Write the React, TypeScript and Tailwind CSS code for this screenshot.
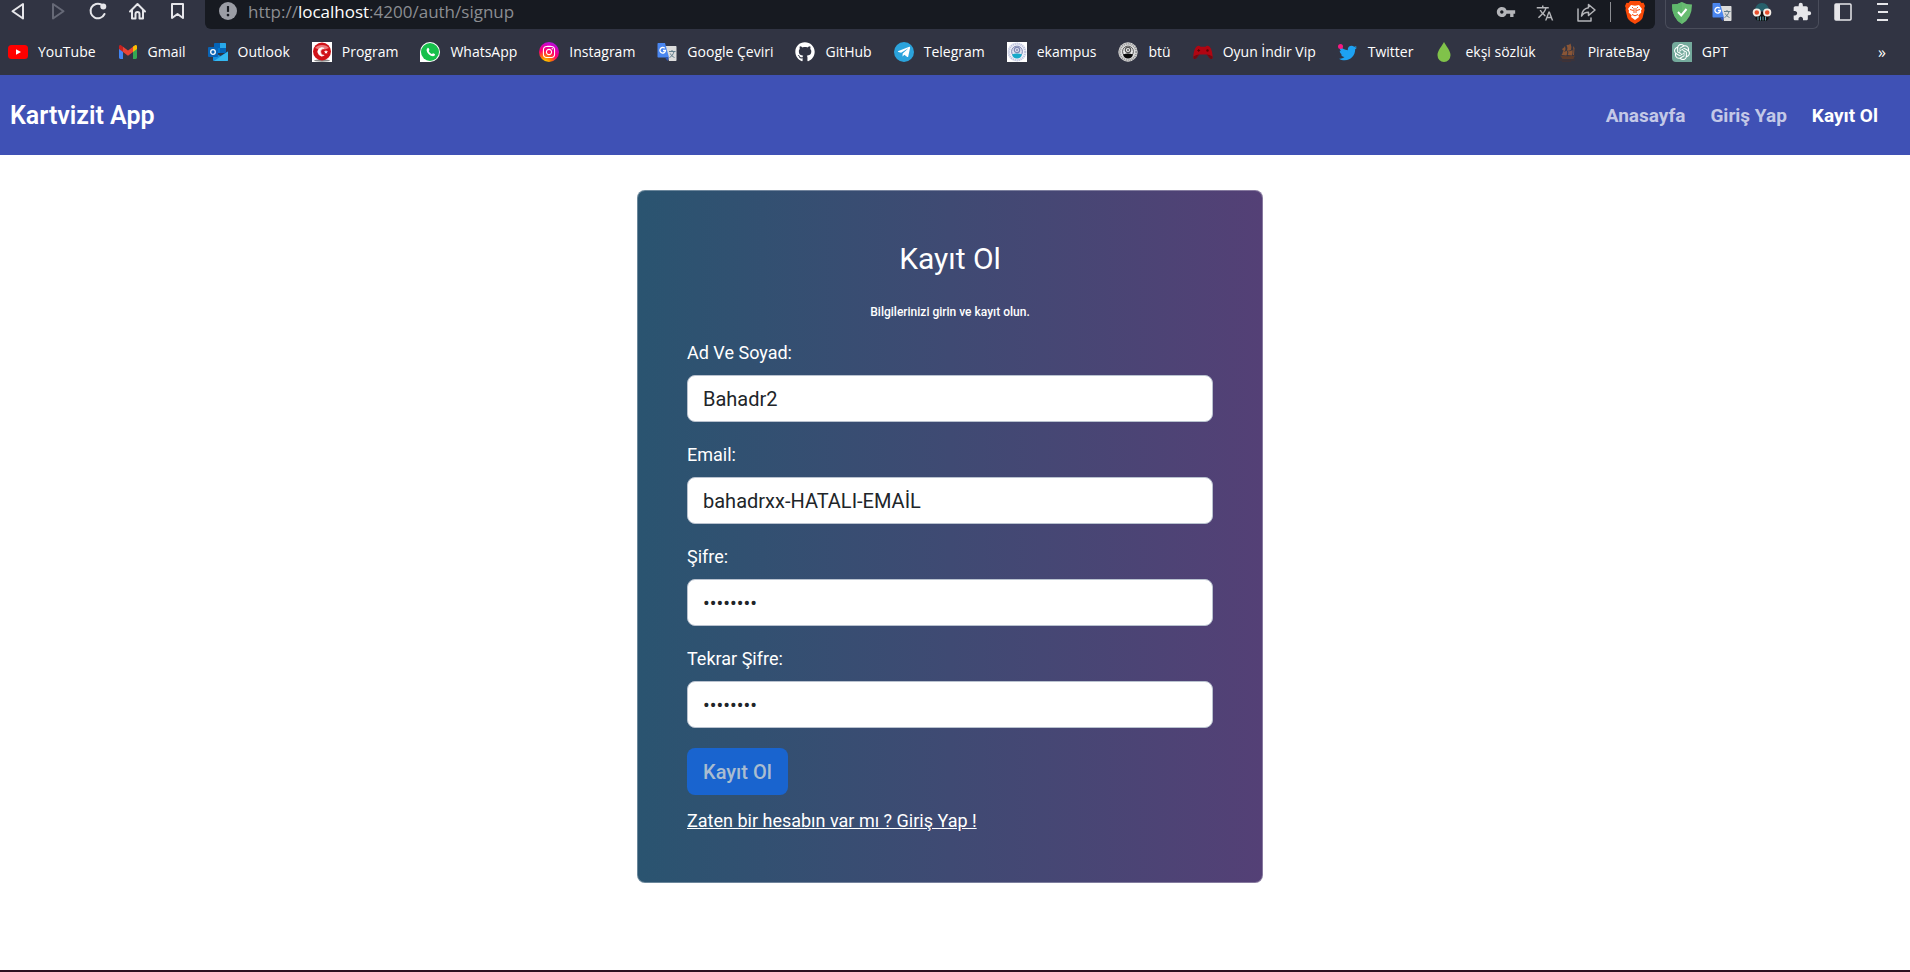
import React from "react";
import { FaWhatsapp, FaGithub, FaTelegramPlane, FaInstagram, FaTwitter } from "react-icons/fa";
import { MdVpnKey, MdTranslate, MdExtension } from "react-icons/md";
import { SiOpenai } from "react-icons/si";

const YouTubeIcon = () => (
  <svg viewBox="0 0 20 20" className="size-5">
    <rect x="0" y="3" width="20" height="14" rx="3.5" fill="#f00" />
    <path d="M8 7.2 13 10l-5 2.8z" fill="#fff" />
  </svg>
);

const GmailIcon = () => (
  <svg viewBox="0 0 20 20" className="size-5">
    <path d="M1 6v9.6c0 .8.6 1.4 1.4 1.4H5V9z" fill="#4285f4" />
    <path d="M19 6v9.6c0 .8-.6 1.4-1.4 1.4H15V9z" fill="#34a853" />
    <path d="M15 4.6 17 3.3c1-.6 2 .1 2 1.2V7l-4 3z" fill="#fbbc04" />
    <path d="M5 10V4.7l5 3.8 5-3.8V10l-5 3.8z" fill="#ea4335" />
    <path d="M1 7V4.5c0-1.100 1-1.800 2-1.200L5 4.700V10z" fill="#c5221f" />
  </svg>
);

const OutlookIcon = () => (
  <svg viewBox="0 0 20 20" className="size-5">
    <rect x="6" y="1" width="12" height="10" rx="1" fill="#0364b8" />
    <path d="M12 1h5a1 1 0 0 1 1 1v4h-6z" fill="#28a8ea" />
    <path d="M6 6h6v5H6z" fill="#0078d4" />
    <path d="M5 10l7.500 4L20 9.500V18a1 1 0 0 1-1 1H6a1 1 0 0 1-1-1z" fill="#1490df" />
    <path d="M20 9.500V18a1 1 0 0 1-1 1H6z" fill="#35b8f1" />
    <rect x="0" y="5" width="10" height="10" rx="1" fill="#0a64b5" />
    <circle cx="5" cy="10" r="2.300" fill="none" stroke="#fff" strokeWidth="1.300" />
  </svg>
);

const ProgramIcon = () => (
  <svg viewBox="0 0 20 20" className="size-5">
    <rect width="20" height="20" fill="#fff" />
    <ellipse cx="10" cy="18.500" rx="8" ry="1.200" fill="#888" />
    <circle cx="10" cy="9.500" r="9" fill="#d01218" />
    <path d="M3 6a8 6 0 0 1 14 0q-7 3-14 0z" fill="#ec7a7c" />
    <path d="M12.200 6.200a4.200 4.200 0 1 0 0 7.200 3.400 3.400 0 1 1 0-7.200z" fill="#fff" stroke="#fff" strokeWidth=".6" />
    <path d="m14 8 .6 1.300 1.500.1-1.200 1 .4 1.400-1.300-.8-1.300.8.4-1.400-1.200-1 1.500-.1z" fill="#fff" />
  </svg>
);

const WhatsAppIcon = () => (
  <span className="grid size-5 place-items-center rounded-full rounded-bl-xs bg-white">
    <span className="grid size-[18px] place-items-center rounded-full bg-[#17c04b]">
      <svg viewBox="3 3 14 14" className="size-[13px]">
        <path d="M6.700 5.300c.6-.6 1.200-.3 1.400.2l.7 1.600c.2.500-.6 1-.7 1.400.5 1.300 1.800 2.600 3.300 3.200.5 0 .9-1.100 1.400-.9l1.700.8c.6.3.3 1.500-.4 2-2.500 1.700-8.300-2.500-8.300-6.300 0-.8.400-1.500.9-2z" fill="#fff" />
      </svg>
    </span>
  </span>
);

const InstagramIcon = () => (
  <span className="grid size-5 place-items-center rounded-full bg-[radial-gradient(circle_at_30%_105%,#ffd600_5%,#ff7a00_25%,#ff0169_50%,#d300c5_75%,#7638fa_100%)]">
    <FaInstagram className="size-3.5 text-white" />
  </span>
);

const TranslateIcon = () => (
  <svg viewBox="0 0 20 20" className="size-5">
    <path d="M8 4h10.500c.6 0 1 .4 1 1v13c0 .6-.4 1-1 1H12z" fill="#dcdcdc" />
    <path d="M12 9.500h6.500M15 8v1.500M17 9.500c-.6 3-2.600 5-4.500 6M13.300 11.500c.8 1.800 2.400 3.200 4.200 4" fill="none" stroke="#607d8b" strokeWidth="1" />
    <path d="M1.500 1H8l4 14.500H1.500c-.6 0-1-.4-1-1V2c0-.6.400-1 1-1z" fill="#4a86f0" />
    <path d="M8 15.500h4L10.500 19z" fill="#2b52b8" />
    <path d="M7.700 6.300A2.800 2.800 0 1 0 8.500 8.500H6" fill="none" stroke="#fff" strokeWidth="1.300" />
  </svg>
);

const TelegramIcon = () => (
  <span className="grid size-5 place-items-center rounded-full bg-[#2ba3dc]">
    <FaTelegramPlane className="size-3.5 text-white" />
  </span>
);

const Crest = ({ square }: { square?: boolean }) => {
  const line = square ? "#8089b4" : "#555";
  return (
    <svg viewBox="0 0 20 20" className="size-5">
      {square && <rect width="20" height="20" fill="#fff" />}
      <circle cx="10" cy="10" r="9.700" fill={square ? "#eef0f8" : "#dedede"} />
      <circle cx="10" cy="10" r="8.200" fill="none" stroke={square ? "#bcc2dc" : "#999"} strokeWidth="2" strokeDasharray="1.200 .8" />
      <circle cx="10" cy="9.500" r="5.400" fill={square ? "#dfe3f0" : "#eee"} stroke={line} strokeWidth="1" />
      <circle cx="10" cy="8" r="2.700" fill="none" stroke={line} strokeWidth="1.200" />
      <circle cx="10" cy="8" r="1" fill={line} />
      <path d="M5 12.500q5-2 10 0-1 4-5 4t-5-4z" fill={square ? "#18a9c9" : "#0a0a0a"} />
    </svg>
  );
};

const GamepadIcon = () => (
  <svg viewBox="0 0 20 20" className="size-5">
    <path d="M4.500 4C6 3.400 7 4 7.500 4.800h5C13 4 14 3.400 15.500 4c2.500 1 4 6 4.200 11 .1 2.500-2 2.700-3.200 1l-2.700-3.500H6.200L3.500 16c-1.200 1.700-3.300 1.500-3.200-1C.500 10 2 5 4.500 4z" fill="#b00512" />
    <path d="M.4 14.500l3-1.500 2.800-.5h7.600l2.800.5 3 1.500c.2 3-1.900 3.200-3.100 1.500l-2.700-3.500H6.200L3.500 16c-1.200 1.700-3.300 1.500-3.100-1.500z" fill="#6d0b12" />
    <path d="M4.300 8.500h2.800M5.700 7.100v2.800" stroke="#5c0408" strokeWidth="1" />
    <circle cx="14.500" cy="8.500" r="1.200" fill="#5c0408" />
  </svg>
);

const TwitterIcon = () => (
  <span className="relative grid size-5 place-items-center">
    <FaTwitter className="mt-0.5 size-[18px] text-[#1da1f2]" />
    <span className="absolute top-0.5 left-0 size-[5px] rounded-full bg-[#f91880]" />
  </span>
);

const DropIcon = () => (
  <svg viewBox="0 0 20 20" className="size-5">
    <path d="M9 0c2 4 6.500 8.500 6.500 13A6.500 6.800 0 0 1 9 20a6.500 6.800 0 0 1-6.500-7C2.500 8.500 7 4 9 0z" fill="#80c24a" />
  </svg>
);

const ShipIcon = () => (
  <svg viewBox="0 0 20 20" className="size-5">
    <path d="M4 7q2-1 3-3 1 3 0 5-2 .5-3-2zM8.500 3q3 0 4-1.500Q14 5 13 8q-2 1-4 .5Q10 6 8.500 3zM3.500 13q1.500-2 1.500-4 2 1 4-.5 1 3-.5 5zM9.500 13q1.500-2 .5-4 3 .5 4.500-1 .5 3-.5 5.500zM15 4l1.500 2-.5 7h-1q1-5 0-9z" fill="#8a5636" />
    <path d="M2 13.500q7 1.500 15 0L15.500 17H4.500z" fill="#5e3c2c" />
    <path d="M1 18h16M4 19.300h9" stroke="#443335" strokeWidth="1" />
  </svg>
);

const GptIcon = () => (
  <span className="grid size-5 place-items-center rounded-l bg-[#74aa9c]">
    <SiOpenai className="size-4 text-white" />
  </span>
);

const bookmarks: { label: string; icon: React.ReactNode }[] = [
  { label: "YouTube", icon: <YouTubeIcon /> },
  { label: "Gmail", icon: <GmailIcon /> },
  { label: "Outlook", icon: <OutlookIcon /> },
  { label: "Program", icon: <ProgramIcon /> },
  { label: "WhatsApp", icon: <WhatsAppIcon /> },
  { label: "Instagram", icon: <InstagramIcon /> },
  { label: "Google Çeviri", icon: <TranslateIcon /> },
  { label: "GitHub", icon: <FaGithub className="size-5 text-white" /> },
  { label: "Telegram", icon: <TelegramIcon /> },
  { label: "ekampus", icon: <Crest square /> },
  { label: "btü", icon: <Crest /> },
  { label: "Oyun İndir Vip", icon: <GamepadIcon /> },
  { label: "Twitter", icon: <TwitterIcon /> },
  { label: "ekşi sözlük", icon: <DropIcon /> },
  { label: "PirateBay", icon: <ShipIcon /> },
  { label: "GPT", icon: <GptIcon /> },
];

const stroke = { fill: "none", stroke: "currentColor", strokeWidth: 1.6, strokeLinejoin: "round", strokeLinecap: "round" } as const;

function Toolbar() {
  return (
    <div className="flex h-[29px] items-start text-[#e6e6ea]">
      <div className="flex gap-5 pt-px pl-2">
        <button aria-label="Geri" className="size-5">
          <svg viewBox="0 0 20 20" {...stroke} strokeWidth={2}><path d="M15 3v14.500L4.500 10.200z" /></svg>
        </button>
        <button aria-label="İleri" className="size-5 text-[#666977]">
          <svg viewBox="0 0 20 20" {...stroke} strokeWidth={2}><path d="M5 3v14.500l10.500-7.300z" /></svg>
        </button>
        <button aria-label="Yenile" className="size-5">
          <svg viewBox="0 0 20 20" {...stroke} strokeWidth={2}>
            <path d="M13.500 3.700A7.300 7.300 0 1 0 16.500 13" />
            <circle cx="15.300" cy="5.500" r="2" fill="currentColor" />
          </svg>
        </button>
        <button aria-label="Ana sayfa" className="size-5">
          <svg viewBox="0 0 20 20" {...stroke} strokeWidth={2}>
            <path d="M2 10.500 9.500 3l7.500 7.500M4 9v8.500h3.500V13a2 2 0 0 1 4 0v4.500H15V9" />
          </svg>
        </button>
        <button aria-label="Yer işareti" className="size-5">
          <svg viewBox="0 0 20 20" {...stroke} strokeWidth={2}><path d="M4 3h11v14l-5.500-4L4 17z" /></svg>
        </button>
      </div>
      <div className="ml-[17px] flex h-[29px] grow items-start rounded-b-md bg-[#171a21] pr-2.5 pl-3.5 text-[#b4b5b9]">
        <svg viewBox="0 0 20 20" className="mt-0.5 size-[18px]">
          <circle cx="10" cy="10" r="10" fill="#9b9da5" />
          <path d="M10 4.500v6.500" stroke="#171a21" strokeWidth="2.400" />
          <circle cx="10" cy="14.500" r="1.500" fill="#171a21" />
        </svg>
        <div className="ml-[11px] grow text-[17px] leading-6 text-[#8b8d92]">
          http://<span className="text-white">localhost</span>:4200/auth/signup
        </div>
        <button aria-label="Parola" className="mt-0.5"><MdVpnKey className="size-5" /></button>
        <button aria-label="Çevir" className="mt-1 ml-5"><MdTranslate className="size-[18px]" /></button>
        <button aria-label="Paylaş" className="mt-0.5 ml-[22px] size-5">
          <svg viewBox="0 0 20 20" {...stroke} strokeWidth={1.500}>
            <path d="M2 7v12h13v-3" />
            <path d="M12.500 2.500 19 8l-6.500 5.500v-3.300C9 10.200 7 11.500 5.500 14 6 9 8.500 6.300 12.500 5.800z" />
          </svg>
        </button>
        <span className="mt-0.5 ml-3.5 h-5 w-px bg-[#8b8d92]" />
        <button aria-label="Brave" className="ml-3.5">
          <svg viewBox="0 0 20 24" className="h-6 w-5">
            <path d="M5 1h10l1.500 2 2-.3L20 6l-.8 2 .3 2-2 8c-1 2.500-5 4.500-7.500 6-2.500-1.500-6.500-3.500-7.500-6l-2-8 .3-2L0 6l1.500-3.300 2 .3z" fill="#fb4a08" />
            <path d="M6 5l4 .8L14 5l3 4-1 1.500.3 2-3 3 .7 1.500L10 20l-4-3 .7-1.500-3-3 .3-2L3 9z" fill="#fff" />
            <path d="M5 9.500l3.500 1M15 9.500l-3.500 1M9 8v5M11 8v5M7 14.500l3 1.300 3-1.300M7 7l1 1M13 7l-1 1" stroke="#fb4a08" strokeWidth="1" fill="none" />
          </svg>
        </button>
      </div>
      <div className="ml-2.5 flex h-[29px] items-start gap-5 rounded-b-md border border-t-0 border-[#4a4d5b] px-1.5 pt-0.5">
        <svg viewBox="0 0 20 22" className="h-[22px] w-5">
          <path d="M10 0q4 2.500 10 2.500 0 14-10 19.500Q0 16.500 0 2.500 6 2.500 10 0z" fill="#68bc71" />
          <path d="M10 0v22Q0 16.500 0 2.500 6 2.500 10 0z" fill="#5fb76c" />
          <path d="m6 10 3.200 3.500L14.500 7" fill="none" stroke="#fff" strokeWidth="2" />
        </svg>
        <TranslateIcon />
        <svg viewBox="0 0 20 20" className="size-5">
          <path d="M3 9C3 4 6 1 10 1s7 3 7 8z" fill="#27606b" />
          <path d="M3 10h14l-.5 7-2 2h-9l-2-2z" fill="#111" />
          <path d="M6 14.500v4M8.500 14.500v4M11 14.500v4M13.500 14.500v4" stroke="#5fa2b0" strokeWidth="1" />
          <circle cx="4.800" cy="10.500" r="3.200" fill="#e8502f" stroke="#f5efe8" strokeWidth="1.800" />
          <circle cx="15.200" cy="10.500" r="3.200" fill="#e8502f" stroke="#f5efe8" strokeWidth="1.800" />
        </svg>
        <MdExtension className="size-5" />
      </div>
      <div className="flex gap-5 pt-0.5 pr-[17px] pl-3.5">
        <button aria-label="Kenar çubuğu" className="size-5">
          <svg viewBox="0 0 20 20">
            <rect x="2" y="2" width="16" height="16" rx="1" fill="none" stroke="currentColor" strokeWidth="1.500" />
            <rect x="2" y="2" width="5" height="16" fill="currentColor" />
          </svg>
        </button>
        <button aria-label="Menü" className="size-5">
          <svg viewBox="0 0 20 20" stroke="currentColor" strokeWidth="1.800">
            <path d="M4 2h11M5 10h10M4 18h11" />
          </svg>
        </button>
      </div>
    </div>
  );
}

function Field({ id, label, type, value }: { id: string; label: string; type: string; value: string }) {
  return (
    <div className="mb-5">
      <label htmlFor={id} className="mb-2.5 block text-[18px] leading-[25px]">{label}</label>
      <input
        id={id}
        type={type}
        defaultValue={value}
        className="block h-[47px] w-full rounded-lg border border-[#b9c2cf] bg-white px-[15px] text-xl text-[#212529]"
      />
    </div>
  );
}

export default function App() {
  return (
    <div className="flex min-h-screen flex-col bg-white font-[Roboto,sans-serif]">
      <div className="bg-[#313443] font-['Open_Sans',sans-serif]">
        <Toolbar />
        <nav aria-label="Yer imleri" className="flex h-[46px] items-center gap-[22px] pr-6 pl-2 text-sm whitespace-nowrap text-white">
          {bookmarks.map((b) => (
            <a key={b.label} href="#" className="flex items-center gap-2.5">
              {b.icon}
              {b.label}
            </a>
          ))}
          <button aria-label="Diğer yer imleri" className="ml-auto text-base">»</button>
        </nav>
      </div>

      <header className="flex h-20 items-center justify-between bg-[#3f51b5] pt-0.5 pr-8 pl-2.5 text-white">
        <a href="#" className="text-[25px] font-semibold">Kartvizit App</a>
        <nav className="flex gap-[25px] text-[19px] font-bold text-white/70">
          <a href="#">Anasayfa</a>
          <a href="#">Giriş Yap</a>
          <a href="#" className="text-white">Kayıt Ol</a>
        </nav>
      </header>

      <main className="flex grow justify-center pt-[35px] pr-2.5">
        <form className="w-full max-w-[626px] self-start rounded-lg border border-white/30 bg-linear-to-r/srgb from-[#2a5470] to-[#544076] bg-origin-border px-[49px] pt-[50px] pb-12 text-white">
          <h1 className="text-center text-[30px] leading-9">Kayıt Ol</h1>
          <p className="mt-[25px] mb-[18px] text-center text-xs leading-5 font-medium">Bilgilerinizi girin ve kayıt olun.</p>
          <Field id="name" label="Ad Ve Soyad:" type="text" value="Bahadr2" />
          <Field id="email" label="Email:" type="text" value="bahadrxx-HATALI-EMAİL" />
          <Field id="password" label="Şifre:" type="password" value="12345678" />
          <Field id="password2" label="Tekrar Şifre:" type="password" value="12345678" />
          <button type="submit" disabled className="block h-[47px] rounded-lg bg-[#1964cf] px-4 text-xl font-medium text-[#a9bdd0]">Kayıt Ol</button>
          <a href="#" className="mt-[13px] inline-block text-[18px] leading-[25px] underline">Zaten bir hesabın var mı ? Giriş Yap !</a>
        </form>
      </main>
      <footer className="h-0.5 bg-[#2b1220]" />
    </div>
  );
}
